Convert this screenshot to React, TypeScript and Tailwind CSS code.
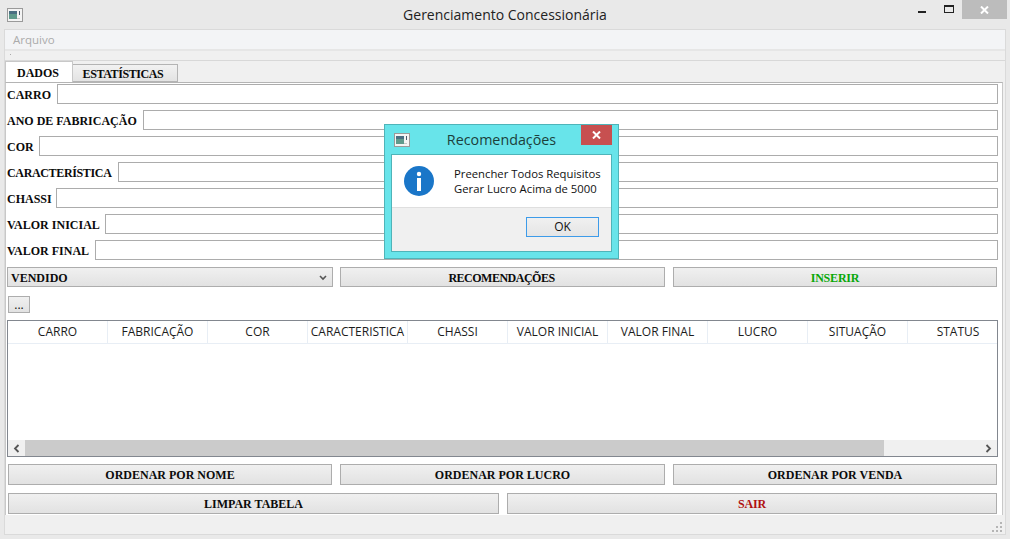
import React from "react";

const serif = "font-['Liberation_Serif',serif] font-bold text-[12px] text-[#0b0b0b]";
const ui = "font-['Open_Sans',sans-serif]";
const btnBg = "bg-gradient-to-b from-[#f0f0f0] to-[#e2e2e2] border border-[#adadad]";

const fields: [string, number, string][] = [
  ["CARRO", 50, ""],
  ["ANO DE FABRICAÇÃO", 136, ""],
  ["COR", 32, ""],
  ["CARACTERÍSTICA", 111, "tracking-[-0.35px]"],
  ["CHASSI", 49, ""],
  ["VALOR INICIAL", 98, ""],
  ["VALOR FINAL", 88, ""],
];
const cols = ["CARRO", "FABRICAÇÃO", "COR", "CARACTERISTICA", "CHASSI", "VALOR INICIAL", "VALOR FINAL", "LUCRO", "SITUAÇÃO", "STATUS"];

function AppIcon() {
  return (
    <svg width="16" height="14" viewBox="0 0 16 14">
      <rect x="0.5" y="0.5" width="15" height="13" fill="#f4f4f4" stroke="#9a9a9a" />
      <rect x="2" y="3" width="8" height="8" fill="#5f9a8c" />
      <rect x="2" y="3" width="8" height="3" fill="#4a6f82" />
      <rect x="10" y="10" width="3" height="1" fill="#c8c8c8" />
      <rect x="12" y="3" width="1" height="4" fill="#4a5a6a" />
    </svg>
  );
}

function Btn({ label, className = "", color = "" }: { label: string; className?: string; color?: string }) {
  return (
    <button className={`${btnBg} ${serif} ${color} flex items-center justify-center ${className}`}>{label}</button>
  );
}

export default function App() {
  return (
    <div className="relative w-[1010px] h-[539px] bg-[#e9e9e9] overflow-hidden flex flex-col">
      {/* Title bar */}
      <div className="h-[29px] shrink-0 flex items-center">
        <div className="w-[106px] pl-[7px] flex"><AppIcon /></div>
        <div className={`${ui} flex-1 text-center text-[14px] text-[#222]`}>Gerenciamento Concessionária</div>
        <div className="flex items-start self-start h-[19px] mr-[3px]">
          <div className="w-[30px] h-[19px] flex items-center justify-center">
            <div className="w-[8px] h-[2px] bg-[#222] mt-[5px] ml-[6px]" />
          </div>
          <div className="w-[28px] h-[19px] flex items-center justify-center">
            <div className="w-[10px] h-[8px] border border-[#222] border-t-[2px] ml-[1px] mt-[-1px]" />
          </div>
          <div className="w-[45px] h-[19px] bg-[#bcbcbc] flex items-center justify-center">
            <svg width="9" height="8" viewBox="0 0 9 8"><path d="M1 0.5 L8 7.5 M8 0.5 L1 7.5" stroke="#fff" strokeWidth="2" /></svg>
          </div>
        </div>
      </div>

      {/* Client area */}
      <div className="mx-[4px] flex-1 mb-[4px] bg-[#f0f0f0] border border-[#dadada] flex flex-col">
        <div className={`${ui} h-[21px] shrink-0 bg-[#f3f4f6] border-b-2 border-[#e6e6e6] px-[8px] text-[11.5px] leading-[20px] text-[#ababab]`}>Arquivo</div>
        <div className="h-[10px] shrink-0 border-b border-[#d8d8d8] bg-[#f0f0f0] pl-[5px]">
          <div className="w-[1px] h-[1px] bg-[#aaa] mt-[3px]" />
        </div>

        {/* Tabs */}
        <div className="flex items-end h-[21px] shrink-0 relative z-10">
          <div className={`${serif} w-[68px] h-[21px] pt-[1px] pr-[2px] bg-white border border-b-0 border-[#c8c8c8] flex items-center justify-center`}>DADOS</div>
          <div className={`${serif} tracking-[-0.4px] w-[105px] h-[18px] pt-[1px] pr-[4px] bg-gradient-to-b from-[#f2f2f2] to-[#e3e3e3] border border-l-0 border-[#b4b4b4] flex items-center justify-center`}>ESTATÍSTICAS</div>
        </div>

        {/* Pane */}
        <div className="w-[998px] h-[433px] bg-white border border-[#c8c8c8] border-b-0 border-t-[#b4b4b4] pl-[1px] pr-[4px] pt-[1px] flex flex-col">
          <div className="flex flex-col gap-[6px]">
            {fields.map(([label, w, extra]) => (
              <div key={label} className="flex items-center h-[20px] gap-[6px]">
                <span className={`${serif} ${extra} pt-[2px] whitespace-nowrap shrink-0`} style={{ width: w - 6 }}>{label}</span>
                <div className="flex-1 h-[20px] bg-white border border-[#acacac]" />
              </div>
            ))}
          </div>

          <div className="flex gap-[7px] mt-[7px] h-[20px]">
            <div className={`${btnBg} ${serif} w-[326px] pl-[3px] pr-[5px] pt-[1px] flex items-center justify-between`}>
              <span>VENDIDO</span>
              <svg width="8" height="6" viewBox="0 0 8 6"><path d="M1 1 L4 4 L7 1" fill="none" stroke="#555" strokeWidth="1.6" /></svg>
            </div>
            <Btn label="RECOMENDAÇÕES" className="w-[325px] pt-[1px] pr-[2px] tracking-[-0.5px]" />
            <Btn label="INSERIR" className="w-[324px] ml-[1px] pt-[1px] tracking-[-0.2px]" color="!text-[#08a808]" />
          </div>

          <button className={`${btnBg} ${ui} w-[22px] h-[17px] mt-[9px] ml-[1px] text-[12px] leading-[12px] text-[#111] flex items-center justify-center`}>...</button>

          {/* Table */}
          <div className="mt-[7px] w-[991px] h-[137px] border border-[#82878f] flex flex-col bg-white">
            <div className="flex h-[23px] shrink-0 border-b border-[#e8eef5]">
              {cols.map((c) => (
                <div key={c} className={`${ui} w-[100px] shrink-0 border-r border-[#e8eef5] last:border-r-0 text-[12px] leading-[22px] text-center text-[#1c1c1c] overflow-hidden whitespace-nowrap`}>{c}</div>
              ))}
            </div>
            <div className="flex-1" />
            <div className="h-[16px] shrink-0 bg-[#f0f0f0] flex items-center">
              <div className="w-[17px] flex items-center justify-center">
                <svg width="7" height="9" viewBox="0 0 7 9"><path d="M5.5 1 L2 4.5 L5.5 8" fill="none" stroke="#555" strokeWidth="1.8" /></svg>
              </div>
              <div className="w-[859px] h-full bg-[#cbcbcb]" />
              <div className="flex-1 flex items-center justify-end pr-[5px]">
                <svg width="7" height="9" viewBox="0 0 7 9"><path d="M1.5 1 L5 4.5 L1.5 8" fill="none" stroke="#555" strokeWidth="1.8" /></svg>
              </div>
            </div>
          </div>

          <div className="flex gap-[8px] mt-[7px] h-[21px] ml-[1px]">
            <Btn label="ORDENAR POR NOME" className="w-[324px]" />
            <Btn label="ORDENAR POR LUCRO" className="w-[325px]" />
            <Btn label="ORDENAR POR VENDA" className="w-[324px]" />
          </div>
          <div className="flex gap-[8px] mt-[8px] h-[21px] ml-[1px]">
            <Btn label="LIMPAR TABELA" className="w-[491px]" />
            <Btn label="SAIR" className="w-[490px] tracking-[-0.2px]" color="!text-[#b01010]" />
          </div>
        </div>

        {/* Status bar */}
        <div className="flex-1 relative">
          <svg className="absolute right-[2px] bottom-[1px]" width="11" height="11" viewBox="0 0 11 11" fill="#b5b5b5">
            <rect x="8" y="8" width="2" height="2" /><rect x="4" y="8" width="2" height="2" /><rect x="0" y="8" width="2" height="2" />
            <rect x="8" y="4" width="2" height="2" /><rect x="4" y="4" width="2" height="2" /><rect x="8" y="0" width="2" height="2" />
          </svg>
        </div>
      </div>

      {/* Dialog */}
      <div className="absolute left-[384px] top-[124px] w-[235px] h-[135px] bg-[#68e4ea] border border-[#4fb4b9] flex flex-col">
        <div className="h-[29px] shrink-0 flex items-start">
          <div className="mt-[8px] ml-[9px]"><AppIcon /></div>
          <div className={`${ui} flex-1 pl-[12px] text-center text-[14.3px] leading-[30px] text-[#1c3f3b]`}>Recomendações</div>
          <div className="w-[31px] h-[20px] mr-[6px] bg-[#c75050] flex items-center justify-center">
            <svg width="9" height="8" viewBox="0 0 9 8"><path d="M1 0.5 L8 7.5 M8 0.5 L1 7.5" stroke="#fff" strokeWidth="2" /></svg>
          </div>
        </div>
        <div className="mx-[6px] mb-[6px] flex-1 border border-[#4fb4b9] flex flex-col bg-[#f0f0f0]">
          <div className="h-[53px] shrink-0 bg-white border-b border-[#dfdfdf] flex pl-[12px] pt-[11px]">
            <svg width="30" height="30" viewBox="0 0 30 30" className="shrink-0">
              <circle cx="15" cy="15" r="15" fill="#1a76c8" />
              <circle cx="15" cy="8" r="2.2" fill="#fff" />
              <rect x="13" y="12" width="4" height="13" fill="#fff" />
            </svg>
            <div className={`${ui} ml-[20px] text-[11.3px] leading-[15px] text-[#111] whitespace-nowrap`}>
              Preencher Todos Requisitos<br />Gerar Lucro Acima de 5000
            </div>
          </div>
          <div className="flex-1 flex justify-end items-start pt-[9px] pr-[12px]">
            <button className={`${ui} w-[73px] h-[20px] bg-gradient-to-b from-[#f0f0f0] to-[#e5e5e5] border border-[#3d9be9] text-[12px] leading-[18px] text-[#111]`}>OK</button>
          </div>
        </div>
      </div>
    </div>
  );
}
